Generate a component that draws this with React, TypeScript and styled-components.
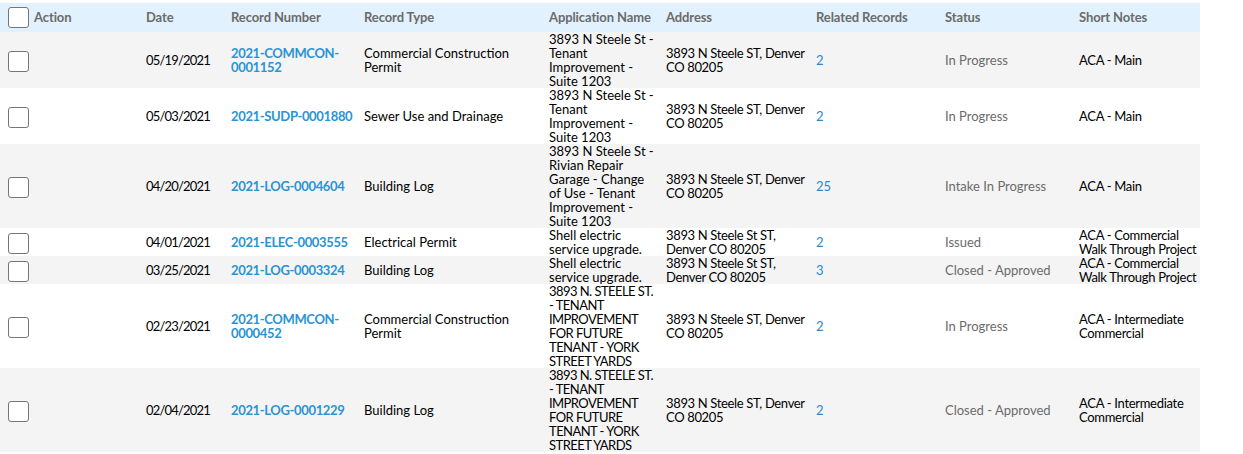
import { FC } from "react";
import styled, { createGlobalStyle } from "styled-components";

const COLUMNS = "146px 85px 133px 185px 117px 150px 129px 134px 121px";

const rows = [
  { date: "05/19/2021", num: "2021-COMMCON-0001152", type: "Commercial Construction Permit", app: "3893 N Steele St - Tenant Improvement - Suite 1203", addr: "3893 N Steele ST, Denver CO 80205", rel: "2", status: "In Progress", notes: "ACA - Main", h: 56 },
  { date: "05/03/2021", num: "2021-SUDP-0001880", type: "Sewer Use and Drainage", app: "3893 N Steele St - Tenant Improvement - Suite 1203", addr: "3893 N Steele ST, Denver CO 80205", rel: "2", status: "In Progress", notes: "ACA - Main", h: 56 },
  { date: "04/20/2021", num: "2021-LOG-0004604", type: "Building Log", app: "3893 N Steele St - Rivian Repair Garage - Change of Use - Tenant Improvement - Suite 1203", addr: "3893 N Steele ST, Denver CO 80205", rel: "25", status: "Intake In Progress", notes: "ACA - Main", h: 84 },
  { date: "04/01/2021", num: "2021-ELEC-0003555", type: "Electrical Permit", app: "Shell electric service upgrade.", addr: "3893 N Steele St ST, Denver CO 80205", rel: "2", status: "Issued", notes: "ACA - Commercial Walk Through Project", h: 28 },
  { date: "03/25/2021", num: "2021-LOG-0003324", type: "Building Log", app: "Shell electric service upgrade.", addr: "3893 N Steele St ST, Denver CO 80205", rel: "3", status: "Closed - Approved", notes: "ACA - Commercial Walk Through Project", h: 28 },
  { date: "02/23/2021", num: "2021-COMMCON-0000452", type: "Commercial Construction Permit", app: "3893 N. STEELE ST. - TENANT IMPROVEMENT FOR FUTURE TENANT - YORK STREET YARDS", addr: "3893 N Steele ST, Denver CO 80205", rel: "2", status: "In Progress", notes: "ACA - Intermediate Commercial", h: 84, caps: true },
  { date: "02/04/2021", num: "2021-LOG-0001229", type: "Building Log", app: "3893 N. STEELE ST. - TENANT IMPROVEMENT FOR FUTURE TENANT - YORK STREET YARDS", addr: "3893 N Steele ST, Denver CO 80205", rel: "2", status: "Closed - Approved", notes: "ACA - Intermediate Commercial", h: 84, caps: true },
];

const headers = ["Date", "Record Number", "Record Type", "Application Name", "Address", "Related Records", "Status", "Short Notes"];

const App: FC = () => (
  <>
    <GlobalStyle />
    <Table>
      <HeaderRow>
        <ActionHead>
          <Check />
          <HeadLabel>Action</HeadLabel>
        </ActionHead>
        {headers.map((h) => (
          <HeadLabel key={h}>{h}</HeadLabel>
        ))}
      </HeaderRow>
      {rows.map((r, i) => (
        <Row key={r.num} $height={r.h} $odd={i % 2 === 0}>
          <CheckCell>
            <Check />
          </CheckCell>
          <DateCell>{r.date}</DateCell>
          <RecordCell>{r.num}</RecordCell>
          <Cell>{r.type}</Cell>
          <AppCell $caps={!!r.caps}>{r.app}</AppCell>
          <AddressCell>{r.addr}</AddressCell>
          <RelatedCell>{r.rel}</RelatedCell>
          <StatusCell>{r.status}</StatusCell>
          <NotesCell>{r.notes}</NotesCell>
        </Row>
      ))}
    </Table>
  </>
);

export default App;

const GlobalStyle = createGlobalStyle`
  html, body {
    margin: 0;
    background: #fff;
  }
  body {
    font-family: "Lato", "Open Sans", sans-serif;
    font-size: 13px;
    line-height: 14px;
    color: #000;
  }
`;

const Table = styled.div`
  width: 1200px;
  padding-top: 3px;
`;

const HeaderRow = styled.div`
  display: grid;
  grid-template-columns: ${COLUMNS};
  align-items: center;
  height: 29px;
  background: #e1f1fd;
`;

const ActionHead = styled.div`
  display: flex;
  align-items: center;
  gap: 5px;
  padding-left: 8px;
`;

const HeadLabel = styled.div`
  font-weight: 700;
  color: #6b6b6b;
  white-space: nowrap;
  letter-spacing: -0.1px;
  padding-bottom: 2px;
`;

const Row = styled.div<{ $height: number; $odd: boolean }>`
  display: grid;
  grid-template-columns: ${COLUMNS};
  align-items: center;
  height: ${(p) => p.$height}px;
  background: ${(p) => (p.$odd ? "#f4f4f4" : "#fff")};
`;

const CheckCell = styled.div`
  display: flex;
  padding-left: 8px;
`;

const Check = styled.div`
  width: 19px;
  height: 19px;
  background: #fff;
  border: 1px solid #767676;
  border-radius: 3px;
`;

const Cell = styled.div`
  padding-right: 6px;
  padding-bottom: 2px;
`;

const DateCell = styled(Cell)`
  letter-spacing: -0.8px;
`;

const RecordCell = styled(Cell)`
  color: #2a93d5;
  font-weight: 700;
  letter-spacing: -0.35px;
`;

const AppCell = styled(Cell)<{ $caps: boolean }>`
  padding-right: 9px;
  letter-spacing: ${(p) => (p.$caps ? "-0.55px" : "0")};
`;

const AddressCell = styled(Cell)`
  letter-spacing: -0.35px;
`;

const RelatedCell = styled(Cell)`
  color: #2a88cc;
`;

const StatusCell = styled(Cell)`
  color: #6b6b6b;
`;

const NotesCell = styled(Cell)`
  padding-right: 0;
  letter-spacing: -0.3px;
`;
